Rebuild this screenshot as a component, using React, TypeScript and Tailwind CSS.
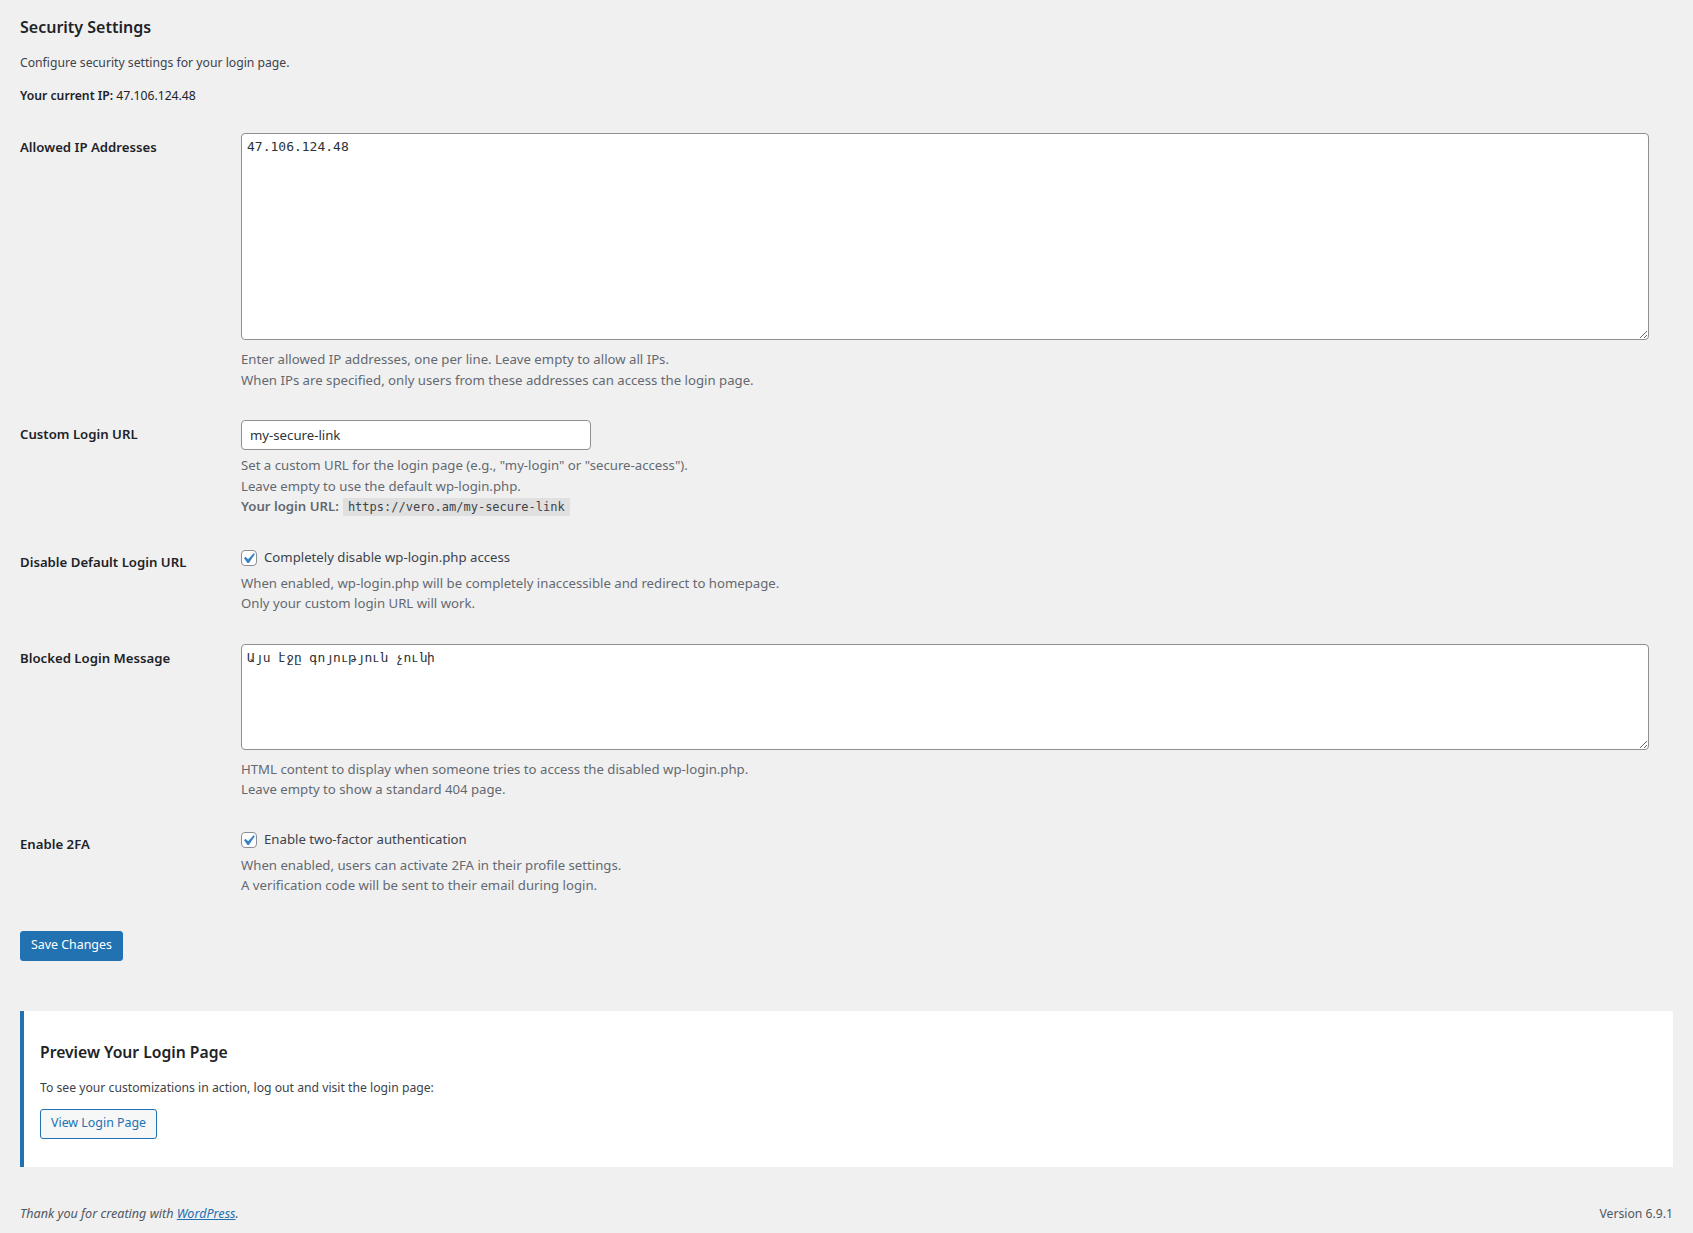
import type { ReactNode } from 'react';

const sans = "font-['Segoe_UI','Noto_Sans',sans-serif]";
const mono = "font-['DejaVu_Sans_Mono','Liberation_Mono',monospace]";

function Checkbox() {
  return (
    <span className="relative inline-block h-4 w-4 shrink-0 rounded-[4px] border border-[#8c8f94] bg-white mr-[7px]">
      <svg viewBox="0 0 20 20" className="absolute -top-[3px] -left-[4px] h-[21px] w-[21px]">
        <path d="M14.83 4.89l1.34.94-5.81 8.38H9.02L5.78 9.67l1.34-1.25 2.57 2.4z" fill="#3582c4" />
      </svg>
    </span>
  );
}

function Row({ label, children }: { label: string; children: ReactNode }) {
  return (
    <div className="flex">
      <div className="w-[221px] shrink-0 pt-[20px] pb-[20px] pr-[10px] text-[13.2px] leading-[18px] font-semibold text-[#1d2327]">
        {label}
      </div>
      <div className="flex-1 py-[15px]">{children}</div>
    </div>
  );
}

function Help({ children, className = '' }: { children: ReactNode; className?: string }) {
  return <p className={`text-[13.2px] leading-[20.5px] text-[#646970] ${className}`}>{children}</p>;
}

export default function App() {
  return (
    <div className={`min-h-screen bg-[#f0f0f1] ${sans} text-[#3c434a]`}>
      <div className="px-[20px] pt-[15px]">
        <h2 className="text-[16px] leading-[24px] font-semibold text-[#1d2327]">Security Settings</h2>
        <p className="mt-[14px] text-[12.2px] leading-[20px]">Configure security settings for your login page.</p>
        <p className="mt-[13px] text-[12.2px] leading-[20px] text-[#1d2327]">
          <span className="font-semibold">Your current IP:</span> 47.106.124.48
        </p>

        <div className="mt-[12px]">
          <Row label="Allowed IP Addresses">
            <textarea
              defaultValue="47.106.124.48"
              className={`block h-[207px] w-[1408px] rounded-[4px] border border-[#8c8f94] bg-white px-[5px] pt-[3px] text-[13px] leading-[20px] text-[#2c3338] ${mono} outline-none`}
            />
            <Help className="mt-[9px]">
              Enter allowed IP addresses, one per line. Leave empty to allow all IPs.
              <br />
              When IPs are specified, only users from these addresses can access the login page.
            </Help>
          </Row>

          <Row label="Custom Login URL">
            <input
              defaultValue="my-secure-link"
              className="block h-[30px] w-[350px] rounded-[4px] border border-[#8c8f94] bg-white px-[8px] text-[13.2px] text-[#2c3338] outline-none"
            />
            <Help className="mt-[5px]">
              Set a custom URL for the login page (e.g., "my-login" or "secure-access").
              <br />
              Leave empty to use the default wp-login.php.
              <br />
              <span className="font-semibold">Your login URL:</span>
              <code className={`ml-[4px] bg-[#e0e0e0] px-[5px] py-[2px] text-[12px] text-[#3c434a] ${mono}`}>
                https://vero.am/my-secure-link
              </code>
            </Help>
          </Row>

          <Row label="Disable Default Login URL">
            <label className="flex h-[21px] items-center text-[13.2px] text-[#3c434a]">
              <Checkbox />
              Completely disable wp-login.php access
            </label>
            <Help className="mt-[4px]">
              When enabled, wp-login.php will be completely inaccessible and redirect to homepage.
              <br />
              Only your custom login URL will work.
            </Help>
          </Row>

          <Row label="Blocked Login Message">
            <textarea
              defaultValue="Այս էջը գոյություն չունի"
              className={`block h-[106px] w-[1408px] rounded-[4px] border border-[#8c8f94] bg-white px-[5px] pt-[3px] text-[13px] leading-[20px] text-[#2c3338] ${mono} outline-none`}
            />
            <Help className="mt-[9px]">
              HTML content to display when someone tries to access the disabled wp-login.php.
              <br />
              Leave empty to show a standard 404 page.
            </Help>
          </Row>

          <Row label="Enable 2FA">
            <label className="flex h-[21px] items-center text-[13.2px] text-[#3c434a]">
              <Checkbox />
              Enable two-factor authentication
            </label>
            <Help className="mt-[4px]">
              When enabled, users can activate 2FA in their profile settings.
              <br />
              A verification code will be sent to their email during login.
            </Help>
          </Row>
        </div>

        <div className="mt-[20px]">
          <button className="h-[30px] rounded-[3px] border border-[#2271b1] bg-[#2271b1] px-[10px] text-[12.4px] text-white">
            Save Changes
          </button>
        </div>

        <div className="mt-[50px] border-l-4 border-[#2271b1] bg-white pl-[16px] pr-[20px] pt-[30px] pb-[28px]">
          <h2 className="text-[15.7px] leading-[22px] font-semibold text-[#1d2327]">Preview Your Login Page</h2>
          <p className="mt-[15px] text-[12.2px] leading-[20px] text-[#3c434a]">
            To see your customizations in action, log out and visit the login page:
          </p>
          <button className="mt-[11px] h-[30px] rounded-[3px] border border-[#2271b1] bg-[#f6f7f7] px-[10px] text-[12.4px] text-[#2271b1]">
            View Login Page
          </button>
        </div>

        <div className="mt-[37px] flex justify-between pb-[10px] text-[12.6px] leading-[20px] text-[#50575e]">
          <p className="italic">
            Thank you for creating with{' '}
            <a href="#" className="text-[#2271b1] underline">
              WordPress
            </a>
            .
          </p>
          <p className="text-[12.2px]">Version 6.9.1</p>
        </div>
      </div>
    </div>
  );
}
